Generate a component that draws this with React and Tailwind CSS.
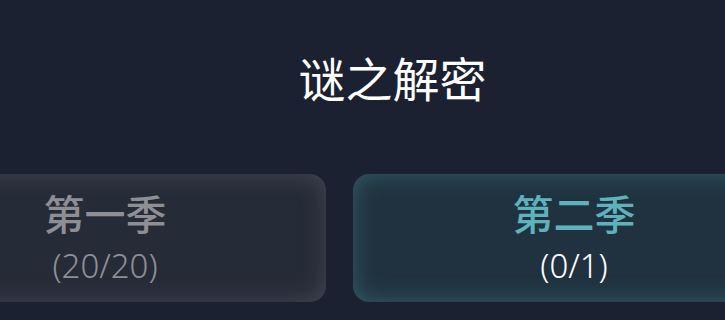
import React from 'react';

const seasons = [
    { name: '第一季', done: 20, total: 20, active: false },
    { name: '第二季', done: 0, total: 1, active: true },
];

function SeasonCard({ season }) {
    const base = 'w-[442px] h-[128px] shrink-0 rounded-[16px] flex flex-col items-center justify-center';
    const look = season.active
        ? 'bg-[#20323f] shadow-[inset_0_0_24px_rgba(85,160,175,0.38)]'
        : 'bg-[#262b38] shadow-[inset_0_0_24px_rgba(160,160,170,0.25)]';
    return (
        <div className={`${base} ${look}`}>
            <div className={`text-[41px] leading-[46px] font-medium ${season.active ? 'text-[#5fb2bc]' : 'text-[#8e8f95]'}`}>
                {season.name}
            </div>
            <div className={`text-[33px] leading-[38px] font-light mt-[10px] ${season.active ? 'text-white' : 'text-[#8e8f95]'}`}>
                ({season.done}/{season.total})
            </div>
        </div>
    );
}

export default function App() {
    return (
        <div
            className="w-[725px] h-[320px] overflow-hidden bg-[#1b2130]"
            style={{ fontFamily: '"Noto Sans", "Noto Sans CJK SC", sans-serif' }}
        >
            <h1 className="pt-[51px] h-[174px] text-center text-white text-[47px] leading-[56px] font-normal pl-[60px]">
                谜之解密
            </h1>
            <div className="flex gap-[27px] ml-[-116px]">
                {seasons.map((s, idx) => (
                    <SeasonCard key={idx} season={s} />
                ))}
            </div>
        </div>
    );
}
